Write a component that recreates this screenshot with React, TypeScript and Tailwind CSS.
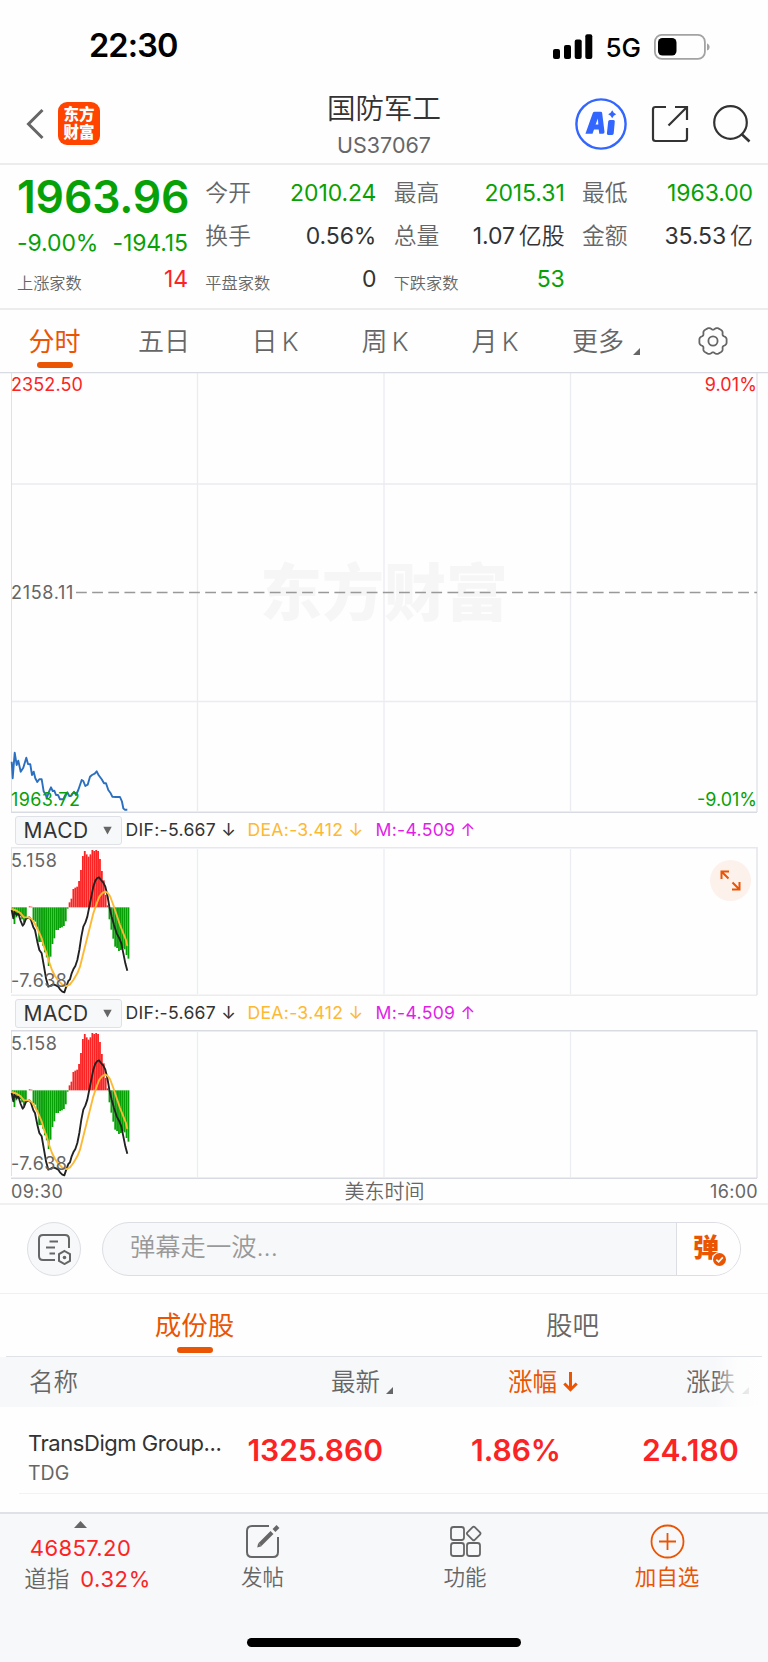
import type { ReactNode } from "react";

const GREEN = "#07a107";

// === Chart data ===
const priceLine =
  "11.7,761.7 12.7,778.3 14.7,752.7 16.7,765 18.3,760.7 20.7,771.7 23.3,767.7 26.3,757.7 28,764 30.3,764.3 32,775 33.7,771.7 35.3,778.3 37.3,782 39.3,779.3 41.7,779.3 43.7,791.7 45.7,794 46.7,798.3 49,791.7 51,787.3 52.7,791 54.3,790.7 56,795 58,795 60,799.3 63.3,799.3 65.3,795 67.3,792.3 69.3,796 71,796 74,791.7 76,795 78.3,790 81.7,780 83.3,781 85.3,786 87.7,784.7 90,776.7 92,775 94.7,773.7 96.7,771.3 98.7,775.3 101.7,779.3 104,783.3 106,783.3 108.3,790 110.7,793.3 112.3,796.7 116,797 120,797 122,801.7 123.3,808.3 124.7,809.7 127.3,809.7";

const difLine =
  "35,570 40,595 43,575 50,585 55,580 62,603 68,617 72,612 78,596 88,592 93,600 100,622 105,630 112,665 118,690 125,700 132,740 138,775 145,800 152,797 160,793 168,796 175,800 180,808 187,815 193,817 197,805 205,783 210,778 215,760 220,748 226,738 232,720 238,690 244,650 250,620 256,608 262,590 268,560 274,530 280,500 286,482 292,474 297,472 303,480 310,488 316,500 322,525 328,560 335,590 342,615 350,640 358,655 364,670 370,700 376,730 382,752";

const deaLine =
  "35,567 50,572 62,580 72,592 85,592 95,597 105,612 115,632 125,655 132,680 140,700 148,728 156,750 165,768 175,782 188,795 200,798 210,793 220,780 232,760 240,740 250,700 260,660 270,620 280,580 290,550 298,530 306,520 315,515 322,518 330,528 340,555 350,585 360,615 370,640 378,660 382,678";

// positive = green bar below zero, negative = red bar above zero
const macdBars = [
  14, 50, 30, 24, 26, 36, 46, 36, 0, -3, -2, 38, 43, 60, 104, 104, 115, 135, 150, 176, 148, 110, 93, 68, 68, 62, 60, 56, 42, 4,
  -15, -26, -55, -59, -62, -79, -112, -154, -169, -159, -152, -159, -172, -169, -172, -169, -145, -109, -81, -37, -6,
  36, 67, 94, 118, 122, 131, 128, 122, 126, 143, 154,
];

// wavy outline of the settings cog
const cogPath =
  Array.from({ length: 120 }, (_, i) => {
    const a = (i * 3 * Math.PI) / 180;
    const r = 12.9 + 1.15 * Math.cos(6 * a) - 0.45 * Math.cos(12 * a);
    return `${i ? "L" : "M"}${(15 + r * Math.cos(a)).toFixed(2)} ${(15 + r * Math.sin(a)).toFixed(2)}`;
  }).join("") + "Z";

function Stat({ label, value, unit, color, small }: { label: string; value: string; unit?: string; color: string; small?: boolean }) {
  return (
    <div className="flex h-[43px] items-center justify-between whitespace-nowrap">
      {small ? (
        <span className="pt-[7px] text-[16.2px] font-[350] text-[#666]">{label}</span>
      ) : (
        <span className="text-[22.8px] font-[350] text-[#666]">{label}</span>
      )}
      <span className={"text-[23px] tracking-[-0.1px] " + color}>
        {value}
        {unit && <span className="ml-[4px] font-[350]">{unit}</span>}
      </span>
    </div>
  );
}

function Corner({ className }: { className: string }) {
  return (
    <svg className={className} width="7" height="7" viewBox="0 0 7 7">
      <path d="M7 0V7H0Z" fill="currentColor" />
    </svg>
  );
}

function Tab({ width, children }: { width: string; children: ReactNode }) {
  return (
    <div className={"flex h-[62px] items-center justify-center pt-[1px] text-[26px] font-[350] whitespace-nowrap text-[#666] [word-spacing:-3px] " + width}>
      {children}
    </div>
  );
}

function MacdLegend() {
  return (
    <div className="flex h-[34px] items-center pl-[14.5px] text-[17.6px] tracking-[0.3px] whitespace-nowrap">
      <div className="mr-[4px] flex h-[29px] w-[107px] items-center justify-between rounded-[3px] border border-[#dfe1e6] bg-[#f7f8fa] pr-[9px] pl-[8px]">
        <span className="text-[21px] tracking-[0.5px] text-[#333]">MACD</span>
        <svg width="9" height="9" viewBox="0 0 9 9">
          <path d="M0.3 0.8H8.7L4.5 8.4Z" fill="#666" />
        </svg>
      </div>
      <span className="w-[122px] text-[#333]">DIF:-5.667 ↓</span>
      <span className="w-[128px] text-[#fdb933]">DEA:-3.412 ↓</span>
      <span className="text-[#e01ee6]">M:-4.509 ↑</span>
    </div>
  );
}

function MacdChart({ topColor, bottomColor }: { topColor: string; bottomColor: string }) {
  return (
    <div className="relative h-[149px]">
      <svg className="block" width="768" height="149" viewBox="0 0 768 149">
        <path d="M197.5 2V147M384 2V147M570.5 2V147" stroke="#ecedf2" strokeWidth="1.3" />
        <path d="M11.5 0.5V146" stroke="#dfe1e8" />
        <path d="M757 0V148" stroke="#d5d8df" />
        <path d="M11 0.7H757" stroke={topColor} strokeWidth="1.4" />
        <path d="M11 148.3H757" stroke={bottomColor} strokeWidth="1.4" />
        <g transform="translate(0 -127) scale(0.33333)">
          {macdBars.map((v, i) => (
            <rect key={i} x={35 + i * 5.7} y={v < 0 ? 562 + v : 562} width="5.4" height={Math.abs(v)} fill={v < 0 ? "#fb2424" : GREEN} />
          ))}
          <g fill="none" strokeWidth="5.6" strokeLinejoin="round">
            <polyline points={difLine} stroke="#222" />
            <polyline points={deaLine} stroke="#fdb933" />
          </g>
        </g>
      </svg>
      <span className="absolute top-[3px] left-[11px] text-[18px] leading-[22px] tracking-[0.6px] text-[#666]">5.158</span>
      <span className="absolute top-[123px] left-[11px] text-[18px] leading-[22px] tracking-[0.4px] text-[#666]">-7.638</span>
    </div>
  );
}

export default function App() {
  return (
    <div className="relative h-[1662px] w-[768px] overflow-hidden bg-[#fefefe] font-['Inter','Noto_Sans_CJK_SC',sans-serif] leading-none font-normal">

      {/* === Status bar === */}
      <div className="flex h-[84px] items-center justify-between pt-[9px] pr-[57px] pl-[89px] text-black">
        <span className="text-[32.5px] font-semibold tracking-[-0.9px]">22:30</span>
        <div className="flex items-center">
          <svg width="40" height="26" viewBox="0 0 40 26">
            <rect x="0" y="15" width="7" height="10" rx="2" />
            <rect x="11" y="11" width="7" height="14" rx="2" />
            <rect x="21.7" y="5.4" width="7" height="19.6" rx="2" />
            <rect x="32.3" y="0.3" width="7" height="24.7" rx="2" />
          </svg>
          <span className="mr-[13px] ml-[12px] pt-[2px] text-[26px] font-medium">5G</span>
          <svg width="57" height="26" viewBox="0 0 57 26">
            <rect x="0.9" y="0.9" width="50" height="24" rx="7" fill="none" stroke="#a3a3a3" strokeWidth="1.8" />
            <rect x="4" y="4" width="18.5" height="17.5" rx="4.5" />
            <path d="M53 9.5C56.5 10.5 56.5 15.5 53 16.5Z" fill="#a3a3a3" />
          </svg>
        </div>
      </div>

      {/* === Header === */}
      <header className="flex h-[81px] items-center justify-between border-b-2 border-[#ececee] pr-[17px] pl-[26px]">
        <div className="flex w-[251px] items-center">
          <svg width="18" height="32" viewBox="0 0 18 32">
            <path d="M16.5 2L2.5 16L16.5 30" fill="none" stroke="#666" strokeWidth="3" />
          </svg>
          <div className="ml-[14px] flex h-[43px] w-[42px] flex-col items-center justify-center rounded-[9px] bg-[#ff4400] text-[15.5px] leading-[17.5px] font-black text-white">
            <span>东方</span>
            <span>财富</span>
          </div>
        </div>
        <div className="flex flex-col items-center pt-[3px]">
          <h1 className="text-[28.5px] leading-[34px] font-[350] text-[#333]">国防军工</h1>
          <span className="mt-[6px] text-[21.5px] leading-[26px] text-[#666]">US37067</span>
        </div>
        <div className="flex w-[260px] items-center justify-end">
          <svg width="52" height="52" viewBox="0 0 52 52">
            <circle cx="26" cy="26" r="24.6" fill="none" stroke="#3366ff" strokeWidth="2.4" />
            <path
              d="M10.5 35.5L17.8 15Q18.3 13.8 19.6 13.8H25.6Q27 13.8 27.2 15.2L29.5 34Q29.5 35.7 28 35.7H24.3L23.7 31.6H19L17.5 35.7H11Q10.3 35.7 10.5 35.5ZM20.6 26.5H23.3L22.9 20.6Z"
              fill="#3366ff"
            />
            <path d="M33.2 23.5Q33.4 22 34.8 22H38.5Q40 22 39.8 23.6L38.7 35.6Q38.5 37 37.1 37H33.2Q31.7 37 31.9 35.6Z" fill="#3366ff" />
            <path d="M37.2 12.3L38.8 14.7L41.2 16.2L38.8 17.8L37.2 20.2L35.6 17.8L33.2 16.2L35.6 14.7Z" fill="#3366ff" />
          </svg>
          <svg className="ml-[24px]" width="38" height="38" viewBox="0 0 38 38" fill="none" stroke="#333" strokeWidth="2.2">
            <path d="M15 2H4.5Q2 2 2 4.5V33.5Q2 36 4.5 36H33.5Q36 36 36 33.5V23" />
            <path d="M24 2H36V15M36 2L17.5 20.5" />
          </svg>
          <svg className="ml-[23px]" width="39" height="38" viewBox="0 0 39 38" fill="none" stroke="#333" strokeWidth="2.2">
            <circle cx="18.5" cy="17.5" r="16.3" />
            <path d="M29.5 29L37.5 36.5" strokeWidth="2.6" />
          </svg>
        </div>
      </header>

      {/* === Quote === */}
      <section className="flex h-[145px] justify-between border-b-2 border-[#ececee] pt-[7px] pr-[15px] pl-[17px]">
        <div className="w-[171px]">
          <div className="pt-[3px] text-[44.5px] leading-[44px] font-semibold tracking-[-0.2px] whitespace-nowrap text-[#07a107]">1963.96</div>
          <div className="flex h-[39px] items-center justify-between pt-[9px] text-[23px] tracking-[-0.1px] whitespace-nowrap text-[#07a107]">
            <span>-9.00%</span>
            <span>-194.15</span>
          </div>
          <Stat label="上涨家数" value="14" color="text-[#fb2424]" small />
        </div>
        <div className="w-[171px]">
          <Stat label="今开" value="2010.24" color="text-[#07a107]" />
          <Stat label="换手" value="0.56%" color="text-[#333]" />
          <Stat label="平盘家数" value="0" color="text-[#333]" small />
        </div>
        <div className="w-[171px]">
          <Stat label="最高" value="2015.31" color="text-[#07a107]" />
          <Stat label="总量" value="1.07" unit="亿股" color="text-[#333]" />
          <Stat label="下跌家数" value="53" color="text-[#07a107]" small />
        </div>
        <div className="w-[171px]">
          <Stat label="最低" value="1963.00" color="text-[#07a107]" />
          <Stat label="金额" value="35.53" unit="亿" color="text-[#333]" />
        </div>
      </section>

      {/* === Period tabs === */}
      <nav className="flex h-[62px]">
        <div className="flex w-[109px] flex-col items-center pt-[19px] text-[26px] leading-[26px] text-[#ea5504]">
          <span>分时</span>
          <span className="mt-[7px] h-[5.5px] w-[36px] rounded-[3px] bg-[#ea5504]" />
        </div>
        <Tab width="w-[110px]">五日</Tab>
        <Tab width="w-[112px]">日 K</Tab>
        <Tab width="w-[108px]">周 K</Tab>
        <Tab width="w-[112px]">月 K</Tab>
        <div className="flex h-[62px] w-[112px] items-center pt-[1px] pl-[21px] text-[26px] font-[350] text-[#666]">
          更多
          <Corner className="mt-[19px] ml-[9px]" />
        </div>
        <div className="flex h-[62px] items-center pl-[35px]">
          <svg width="30" height="30" viewBox="0 0 30 30" fill="none" stroke="#666" strokeWidth="1.8">
            <path d={cogPath} />
            <circle cx="15" cy="15" r="4.6" />
          </svg>
        </div>
      </nav>

      {/* === Intraday chart === */}
      <div className="relative h-[441px]">
        <div className="absolute top-[186px] left-[260px] text-[62px] leading-[72px] font-black whitespace-nowrap text-[#f6f6f6]">东方财富</div>
        <svg className="relative block" width="768" height="441" viewBox="0 372 768 441">
          <path d="M197.5 373V811M384 373V811M570.5 373V811M11 484H757M11 701.5H757" stroke="#ebecf1" strokeWidth="1.3" />
          <path d="M11.5 373V812" stroke="#dfe1e8" />
          <path d="M757 373V812" stroke="#d5d8df" />
          <path d="M0 372.6H768M11 812.3H757" stroke="#d8dbe2" strokeWidth="1.4" />
          <path d="M76 592.5H757" stroke="#999" strokeWidth="1.3" strokeDasharray="10.8 5.35" />
          <polyline points={priceLine} fill="none" stroke="#2b6fc0" strokeWidth="1.9" strokeLinejoin="round" />
        </svg>
        <div className="absolute top-[2px] right-[11px] left-[11px] flex justify-between text-[18px] leading-[22px] tracking-[0.1px] text-[#fb2424]">
          <span>2352.50</span>
          <span>9.01%</span>
        </div>
        <span className="absolute top-[210px] left-[11px] text-[18px] leading-[22px] tracking-[0.7px] text-[#666]">2158.11</span>
        <div className="absolute right-[11px] bottom-[2px] left-[11px] flex justify-between text-[18px] leading-[22px] text-[#07a107]">
          <span className="tracking-[0.4px]">1963.72</span>
          <span>-9.01%</span>
        </div>
      </div>

      {/* === Indicators === */}
      <MacdLegend />
      <div className="relative">
        <MacdChart topColor="#e6e8ed" bottomColor="#ececee" />
        <div className="absolute top-[13px] right-[17px] flex size-[41px] items-center justify-center rounded-full bg-[#fdf1eb]">
          <svg width="21" height="21" viewBox="0 0 21 21" fill="none" stroke="#ea5504" strokeWidth="2">
            <path d="M1.5 9V1.5H9M1.5 1.5L8.5 8.5M19.5 12V19.5H12M19.5 19.5L12.5 12.5" />
          </svg>
        </div>
      </div>
      <MacdLegend />
      <MacdChart topColor="#d8dbe2" bottomColor="#d8dbe2" />
      <div className="flex h-[26px] items-center border-b-2 border-[#f0f0f2] pt-[2px] pr-[10px] pl-[11px] text-[18px] text-[#666]">
        <span className="flex-1 tracking-[0.4px]">09:30</span>
        <span className="text-[20px] font-[350]">美东时间</span>
        <span className="flex-1 text-right tracking-[0.3px]">16:00</span>
      </div>

      {/* === Bullet comments === */}
      <div className="flex h-[89px] items-center border-b border-[#f0f0f2] pl-[27px]">
        <div className="flex size-[54px] items-center justify-center rounded-full border border-[#dcdee4] bg-[#f7f8fa]">
          <svg width="34" height="32" viewBox="0 0 34 32" fill="none" stroke="#666" strokeWidth="2">
            <path d="M18 27H6Q2 27 2 23V6Q2 2 6 2H28Q32 2 32 6V15" />
            <path d="M12.5 8.5H21M9 14.5H18M12.5 20.5H18" />
            <path d="M27.5 18L33 21.2V27.8L27.5 31L22 27.8V21.2Z" />
            <circle cx="27.5" cy="24.5" r="1.8" fill="#666" stroke="none" />
          </svg>
        </div>
        <div className="ml-[21px] flex h-[54px] w-[639px] overflow-hidden rounded-full border border-[#dcdee4] bg-[#f7f8fa]">
          <div className="flex w-[574px] items-center border-r border-[#dcdee4] pb-[5px] pl-[27px] text-[25.3px] font-[350] text-[#999]">弹幕走一波...</div>
          <div className="relative flex-1 bg-[#fefefe]">
            <span className="absolute top-[10px] left-[16px] text-[26px] leading-[30px] font-black text-[#ea5504]">弹</span>
            <svg className="absolute top-[29px] left-[35px]" width="15" height="15" viewBox="0 0 15 15">
              <circle cx="7.5" cy="7.5" r="7.5" fill="#fefefe" />
              <circle cx="7.5" cy="7.5" r="6.5" fill="#ea5504" />
              <path d="M4.3 7.6L6.7 9.9L10.8 5.4" fill="none" stroke="#fff" strokeWidth="1.6" />
            </svg>
          </div>
        </div>
      </div>

      {/* === Constituents === */}
      <div className="mx-[6px] flex h-[63px] border-b border-[#dfe2e7] text-[26.5px] leading-[27px]">
        <div className="flex w-[377px] flex-col items-center pt-[18px] text-[#ea5504]">
          <span>成份股</span>
          <span className="mt-[8px] h-[5.5px] w-[36px] rounded-[3px] bg-[#ea5504]" />
        </div>
        <div className="flex w-[379px] justify-center pt-[18px] font-[350] text-[#666]">股吧</div>
      </div>
      <div className="relative flex h-[50px] items-center bg-[#f7f8fa] text-[24.5px] font-[350] whitespace-nowrap text-[#666]">
        <span className="w-[331px] pl-[29px]">名称</span>
        <span className="flex w-[177px]">
          最新
          <Corner className="mt-[17px] ml-[6px]" />
        </span>
        <span className="flex w-[178px] items-center font-normal text-[#ea5504]">
          涨幅
          <svg className="ml-[6px]" width="15" height="20" viewBox="0 0 15 20" fill="none" stroke="#ea5504" strokeWidth="3">
            <path d="M7.5 0V18M1.3 11.5L7.5 17.7L13.7 11.5" />
          </svg>
        </span>
        <span className="flex">
          涨跌
          <Corner className="mt-[17px] ml-[7px]" />
        </span>
        <div className="absolute top-0 right-0 h-[50px] w-[54px] bg-linear-to-r from-[#fefefe]/0 via-[#fefefe]/80 via-45% to-[#fefefe]" />
      </div>
      <div className="ml-[19px] flex h-[87px] border-b border-[#f2f2f4] pl-[9px] whitespace-nowrap">
        <div className="w-[219px] pt-[24px]">
          <div className="text-[22px] leading-[24px] tracking-[-0.45px] text-[#333]">TransDigm Group...</div>
          <div className="mt-[7px] text-[19.5px] leading-[22px] text-[#666]">TDG</div>
        </div>
        <div className="flex flex-1 justify-between pt-[28px] pr-[29px] text-[30px] leading-[30px] font-semibold text-[#fb2424]">
          <span className="w-[137px] text-right">1325.860</span>
          <span className="w-[178px] text-right">1.86%</span>
          <span className="w-[178px] text-right tracking-[0.2px]">24.180</span>
        </div>
      </div>

      {/* === Bottom bar === */}
      <footer className="mt-[18px] flex h-[150px] border-t-2 border-[#dfe1e6] bg-[#f7f8fa] text-[21.5px] whitespace-nowrap text-[#666]">
        <div className="flex w-[161px] flex-col items-center pt-[7px]">
          <svg width="13" height="7" viewBox="0 0 13 7">
            <path d="M6.5 0L13 7H0Z" fill="#666" />
          </svg>
          <span className="mt-[8px] text-[22px] leading-[24px] tracking-[0.4px] text-[#fb2424]">46857.20</span>
          <span className="mt-[7px] flex items-center gap-[11px] pl-[14px] leading-[24px]">
            <span className="text-[22.5px] font-[350]">道指</span>
            <span className="text-[22px] tracking-[0.6px] text-[#fb2424]">0.32%</span>
          </span>
        </div>
        <div className="flex w-[203px] flex-col items-center pt-[10px]">
          <svg width="35" height="35" viewBox="0 0 35 35" fill="none" stroke="#666" strokeWidth="2">
            <path d="M24 2H7Q2 2 2 7V28Q2 33 7 33H28Q33 33 33 28V13" />
            <path d="M15 20.5L27 8.5" strokeWidth="4" />
            <path d="M12.2 23.5L13.2 19L16.6 22.2Z" fill="#666" stroke="none" />
            <path d="M29 6.5L33 2.5" strokeWidth="4" />
          </svg>
          <span className="mt-[8px] font-[350]">发帖</span>
        </div>
        <div className="flex w-[202px] flex-col items-center pt-[10px]">
          <svg width="33" height="35" viewBox="0 0 33 35" fill="none" stroke="#666" strokeWidth="1.8">
            <rect x="2" y="3" width="13" height="13" rx="2.5" />
            <rect x="2" y="19" width="13" height="13" rx="2.5" />
            <rect x="18" y="19" width="13" height="13" rx="2.5" />
            <rect x="19.5" y="4.3" width="10.4" height="10.4" rx="1.5" transform="rotate(45 24.7 9.5)" />
          </svg>
          <span className="mt-[8px] font-[350]">功能</span>
        </div>
        <div className="flex w-[202px] flex-col items-center pt-[10px] text-[#ea5504]">
          <svg width="35" height="35" viewBox="0 0 35 35" fill="none" stroke="#ea5504" strokeWidth="1.8">
            <circle cx="17.5" cy="17.5" r="16" />
            <path d="M17.5 9V26M9 17.5H26" />
          </svg>
          <span className="mt-[8px]">加自选</span>
        </div>
        {/* home indicator */}
        <div className="absolute bottom-[15px] left-[247px] h-[9px] w-[274px] rounded-full bg-black" />
      </footer>
    </div>
  );
}
